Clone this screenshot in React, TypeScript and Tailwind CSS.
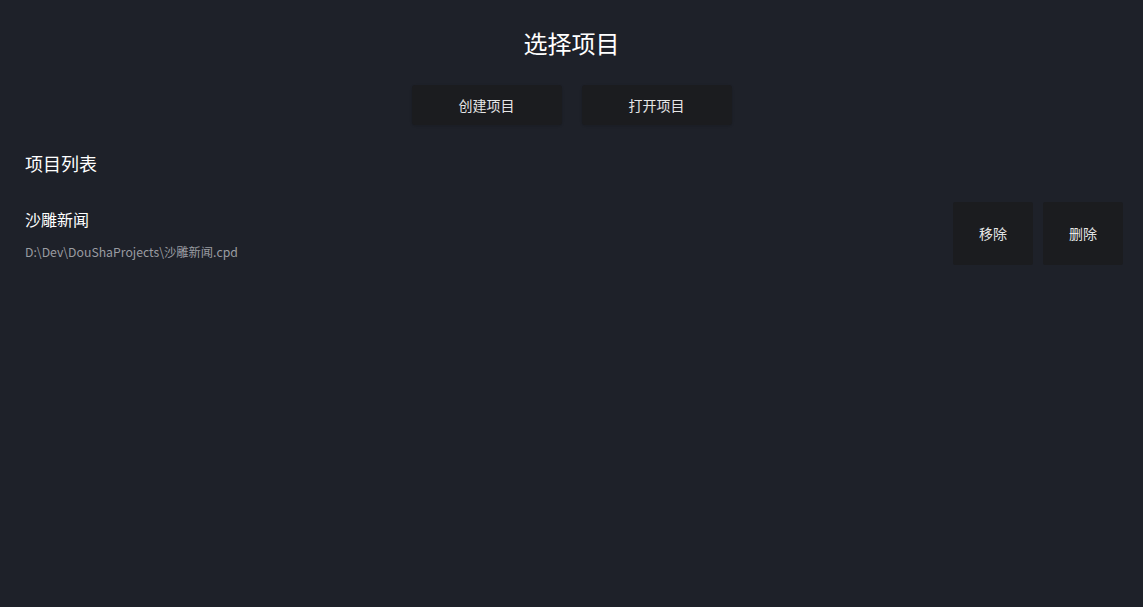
import React from 'react';

const projects = [
  { name: '沙雕新闻', path: 'D:\\Dev\\DouShaProjects\\沙雕新闻.cpd' },
];

export default function App() {
  return (
    <div className="w-full min-h-screen bg-[#1e2129] text-white font-['Noto_Sans_CJK_SC',sans-serif] px-[25px] pt-[27px]">
      <h1 className="text-center text-[24px] leading-[32px] font-normal text-white">选择项目</h1>
      <div className="mt-[26px] flex justify-center gap-[20px]">
        <button className="w-[150px] h-[40px] rounded-[3px] bg-[#1b1c1f] text-[14px] text-[#e6e6e6] shadow-sm">创建项目</button>
        <button className="w-[150px] h-[40px] rounded-[3px] bg-[#1b1c1f] text-[14px] text-[#e6e6e6] shadow-sm">打开项目</button>
      </div>
      <h2 className="mt-[26px] text-[18px] leading-[24px] font-normal">项目列表</h2>
      <div className="mt-[27px] -mr-[5px]">
        {projects.map((p) => (
          <div key={p.path} className="flex items-start justify-between">
            <div className="pt-[5px]">
              <div className="text-[16px] leading-[24px] font-normal">{p.name}</div>
              <div className="mt-[13px] text-[12.25px] leading-[16px] text-[#9a9ca1]">{p.path}</div>
            </div>
            <div className="flex gap-[10px]">
              <button className="w-[80px] h-[63px] rounded-[2px] bg-[#1b1c1f] text-[14px] text-[#e6e6e6]">移除</button>
              <button className="w-[80px] h-[63px] rounded-[2px] bg-[#1b1c1f] text-[14px] text-[#e6e6e6]">删除</button>
            </div>
          </div>
        ))}
      </div>
    </div>
  );
}
